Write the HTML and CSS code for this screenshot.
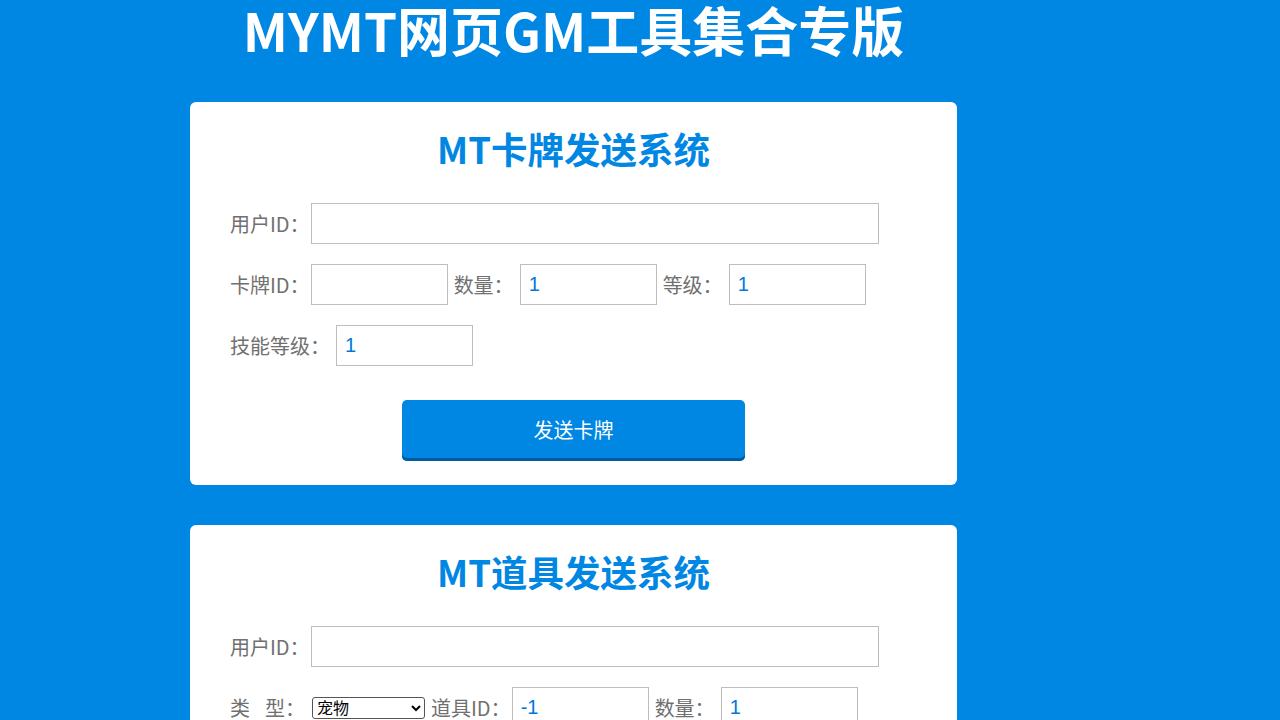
FILE: index.html
```html
<!DOCTYPE html>
<html lang="zh-CN">
<head>
<meta charset="utf-8">
<title>MYMT网页GM工具集合专版</title>
<link rel="stylesheet" href="styles.css">
</head>
<body>
<div class="wrap">
  <h1 class="page-title">MYMT网页GM工具集合专版</h1>

  <section class="card">
    <h2 class="card-title">MT卡牌发送系统</h2>
    <div class="row">
      <label class="lbl lbl-id">用户ID：</label>
      <input class="inp inp-wide" type="text" value="">
    </div>
    <div class="row">
      <label class="lbl lbl-id">卡牌ID：</label>
      <input class="inp" type="text" value="">
      <label class="lbl">数量：</label>
      <input class="inp" type="text" value="1">
      <label class="lbl">等级：</label>
      <input class="inp" type="text" value="1">
    </div>
    <div class="row">
      <label class="lbl">技能等级：</label>
      <input class="inp" type="text" value="1">
    </div>
    <div class="actions">
      <button class="btn" type="button">发送卡牌</button>
    </div>
  </section>

  <section class="card">
    <h2 class="card-title">MT道具发送系统</h2>
    <div class="row">
      <label class="lbl lbl-id">用户ID：</label>
      <input class="inp inp-wide" type="text" value="">
    </div>
    <div class="row">
      <label class="lbl">类<span class="gap"></span>型：</label>
      <select class="sel">
        <option>宠物</option>
        <option>道具</option>
      </select>
      <label class="lbl lbl-id">道具ID：</label>
      <input class="inp" type="text" value="-1">
      <label class="lbl">数量：</label>
      <input class="inp" type="text" value="1">
    </div>
    <div class="actions">
      <button class="btn" type="button">发送道具</button>
    </div>
  </section>
</div>
</body>
</html>
```

FILE: styles.css
```css
html, body {
  margin: 0;
  padding: 0;
  background: #0086e3;
}

body {
  font-family: "Noto Sans CJK SC", "Noto Sans", sans-serif;
}

.wrap {
  width: 767px;
  margin-left: 190px;
}

.page-title {
  margin: 0 0 38px;
  height: 64px;
  line-height: 58px;
  font-size: 53px;
  font-weight: 700;
  color: #ffffff;
  text-align: center;
}

.card {
  background: #ffffff;
  border-radius: 6px;
  padding: 22px 40px 24px;
  margin-bottom: 40px;
}

.card-title {
  margin: 0 0 29px;
  height: 50px;
  line-height: 50px;
  font-size: 36.5px;
  font-weight: 700;
  color: #0086e3;
  text-align: center;
}

.row {
  display: flex;
  align-items: center;
  height: 41px;
  margin-bottom: 20px;
}

.row:last-of-type {
  margin-bottom: 0;
}

.lbl {
  font-size: 20px;
  color: #707070;
  line-height: 41px;
  margin-right: 6px;
  white-space: nowrap;
}

.lbl-id {
  margin-right: 1px;
}

.inp + .lbl,
.sel + .lbl {
  margin-left: 6px;
}

.gap {
  display: inline-block;
  width: 15px;
}

.inp {
  box-sizing: border-box;
  width: 137px;
  height: 41px;
  border: 1px solid #bdbdbd;
  border-radius: 0;
  padding: 0 8px;
  font-family: "Liberation Sans", Arial, sans-serif;
  font-size: 20px;
  color: #0077dd;
  background: #fff;
  outline: none;
}

.inp-wide {
  width: 568px;
}

.sel {
  box-sizing: border-box;
  width: 113px;
  height: 22px;
  margin-left: 1px;
  margin-top: 10px;
  align-self: flex-start;
  font-family: "Liberation Sans", "Noto Sans CJK SC", sans-serif;
  font-size: 16px;
  color: #000;
  border: 1px solid #555;
  border-radius: 3px;
  background: #fff;
  padding: 0;
}

.actions {
  display: flex;
  justify-content: center;
  margin-top: 34px;
}

.btn {
  width: 343px;
  height: 61px;
  border: none;
  border-radius: 5px;
  background: #0086e3;
  box-shadow: inset 0 -3px 0 #005c9e;
  color: #ffffff;
  font-family: "Noto Sans CJK SC", sans-serif;
  font-size: 20px;
  padding: 0 0 3px;
  cursor: pointer;
}
```
